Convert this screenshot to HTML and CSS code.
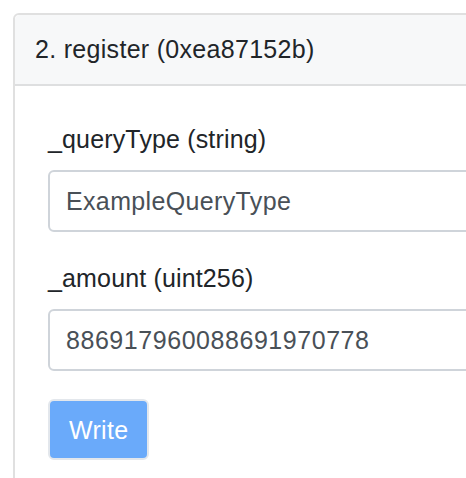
FILE: index.html
```html
<!DOCTYPE html>
<html lang="en">
<head>
<meta charset="utf-8">
<title>register</title>
<link rel="stylesheet" href="styles.css">
</head>
<body>
<div class="card">
  <div class="card-header">2. register (0xea87152b)</div>
  <div class="card-body">
    <div class="form-group">
      <label class="label">_queryType (string)</label>
      <input class="input input-text" type="text" value="ExampleQueryType">
    </div>
    <div class="form-group">
      <label class="label">_amount (uint256)</label>
      <input class="input input-num" type="text" value="886917960088691970778">
    </div>
    <button class="btn" type="button">Write</button>
  </div>
</div>
</body>
</html>
```
FILE: styles.css
```css
html, body {
  margin: 0;
  padding: 0;
  overflow: hidden;
  background: #ffffff;
}
body {
  font-family: "Liberation Sans", Arial, sans-serif;
  font-size: 25px;
  line-height: 36px;
  color: #212529;
  padding: 13px 0 0 13px;
}
.card {
  width: 640px;
  border: 2px solid #e0e0e0;
  border-radius: 6px;
  background: #ffffff;
}
.card-header {
  background: #f7f8f9;
  border-bottom: 2px solid #dedfe0;
  border-radius: 5px 5px 0 0;
  padding: 16px 20px 17px 20px;
  line-height: 36px;
  letter-spacing: 0.3px;
}
.card-body {
  padding: 35px 33px 40px 33px;
}
.form-group {
  display: flex;
  flex-direction: column;
  margin-bottom: 28px;
}
.label {
  display: block;
  margin-bottom: 13px;
  line-height: 36px;
  letter-spacing: 0.15px;
}
.input {
  display: block;
  box-sizing: border-box;
  width: 100%;
  height: 62px;
  margin: 0;
  padding: 11px 16px;
  border: 2px solid #cfd4da;
  border-radius: 6px;
  font-family: "Liberation Sans", Arial, sans-serif;
  font-size: 25px;
  line-height: 36px;
  color: #495057;
  background: #ffffff;
  outline: none;
}
.input-text {
  letter-spacing: 0.35px;
}
.input-num {
  letter-spacing: 0.55px;
}
.btn {
  display: block;
  box-sizing: border-box;
  height: 61px;
  margin: 0;
  padding: 10px 19px;
  border: 2px solid #e3e7ec;
  border-radius: 6px;
  background: #6aaafa;
  color: #ffffff;
  font-family: "Liberation Sans", Arial, sans-serif;
  font-size: 25px;
  line-height: 36px;
  letter-spacing: 0.3px;
}
```
